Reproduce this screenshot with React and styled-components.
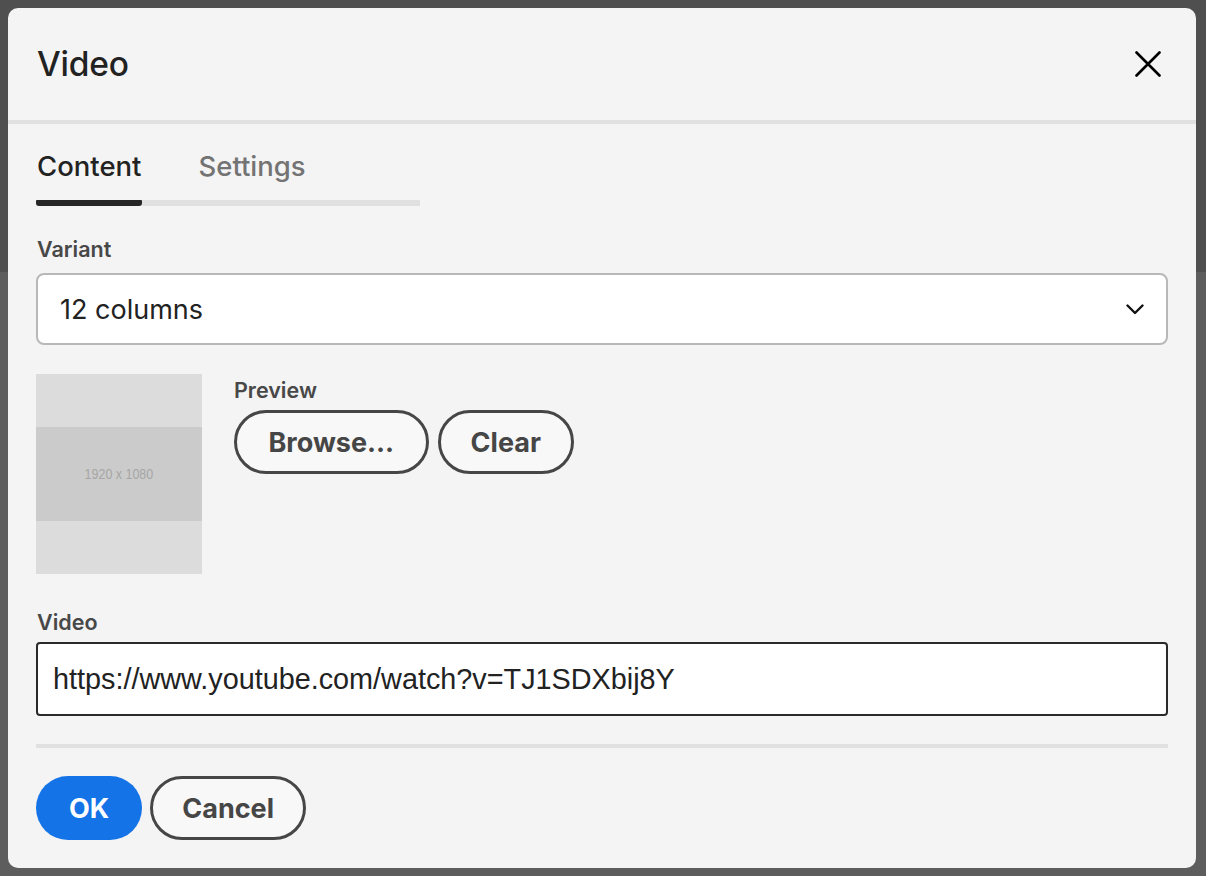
import React, { useState } from 'react';
import styled, { createGlobalStyle } from 'styled-components';

const GlobalStyle = createGlobalStyle`
    html, body {
        margin: 0;
        padding: 0;
        background: #545454;
    }
    body {
        font-family: Inter, "Noto Sans", sans-serif;
        -webkit-font-smoothing: antialiased;
    }
`;

const Backdrop = styled.div`
    width: 1206px;
    height: 876px;
    padding: 8px 10px 8px 8px;
    box-sizing: border-box;
    background: linear-gradient(to bottom, #4f4f4f 0, #4f4f4f 272px, #5d5d5d 272px);
`;

const Dialog = styled.div`
    width: 1188px;
    height: 860px;
    background: #f4f4f4;
    border-radius: 10px;
    display: flex;
    flex-direction: column;
    overflow: hidden;
`;

const Header = styled.header`
    height: 112px;
    padding: 0 33px 0 29px;
    display: flex;
    align-items: center;
    justify-content: space-between;
    border-bottom: 4px solid #e1e1e1;
`;

const Title = styled.h1`
    margin: 0;
    font-size: 33.5px;
    font-weight: 500;
    color: #222;
    letter-spacing: -0.2px;
`;

const CloseButton = styled.button`
    width: 30px;
    height: 30px;
    padding: 0;
    border: none;
    background: none;
    display: flex;
    align-items: center;
    justify-content: center;
    cursor: pointer;
`;

const Body = styled.div`
    padding: 0 28px 0 28px;
    display: flex;
    flex-direction: column;
`;

const TabList = styled.div`
    width: 384px;
    height: 76px;
    display: flex;
    align-items: stretch;
    border-bottom: 6px solid #e0e0e0;
`;

const Tab = styled.button`
    padding: 8px 1px 0;
    margin-right: ${(p) => p.$gap || 0}px;
    border: none;
    background: none;
    font-family: inherit;
    font-size: 27.5px;
    font-weight: 500;
    color: ${(p) => (p.$active ? '#222' : '#737373')};
    position: relative;
    cursor: pointer;

    &::after {
        content: '';
        display: ${(p) => (p.$active ? 'block' : 'none')};
        position: absolute;
        left: 0;
        right: 0;
        bottom: -6px;
        height: 6px;
        background: #262626;
        border-radius: 1px 1px 3px 3px;
    }
`;

const Label = styled.div`
    font-size: 21.5px;
    line-height: 27px;
    font-weight: 600;
    color: #484848;
    margin: ${(p) => p.$margin || '0'};
`;

const SelectBox = styled.div`
    height: 72px;
    box-sizing: border-box;
    margin-top: 10px;
    padding: 0 22px 0 22px;
    display: flex;
    align-items: center;
    justify-content: space-between;
    background: #fff;
    border: 2px solid #b8b8b8;
    border-radius: 8px;
    font-size: 27px;
    color: #222;
    cursor: pointer;
`;

const PreviewRow = styled.div`
    display: flex;
    gap: 32px;
    margin-top: 29px;
`;

const Thumb = styled.div`
    width: 166px;
    height: 200px;
    background: #dcdcdc;
    display: flex;
    flex-direction: column;
    justify-content: center;
`;

const ThumbBand = styled.div`
    height: 94px;
    background: #cbcbcb;
    display: flex;
    align-items: center;
    justify-content: center;
`;

const ThumbText = styled.span`
    font-family: "Liberation Sans", Arial, sans-serif;
    font-size: 14.5px;
    color: #a6a6a6;
    display: inline-block;
    transform: scaleX(0.86);
`;

const PreviewSide = styled.div`
    display: flex;
    flex-direction: column;
    padding-top: 3px;
`;

const ButtonRow = styled.div`
    display: flex;
    gap: ${(p) => p.$gap || 9}px;
    margin-top: ${(p) => p.$top || 0}px;
`;

const PillButton = styled.button`
    height: 64px;
    padding: 0 ${(p) => p.$pad || 30}px;
    border-radius: 32px;
    font-family: inherit;
    font-size: 27px;
    font-weight: 700;
    cursor: pointer;
    box-sizing: border-box;
    border: ${(p) => (p.$primary ? 'none' : '3px solid #464646')};
    background: ${(p) => (p.$primary ? '#1473e6' : '#f8f8f8')};
    color: ${(p) => (p.$primary ? '#fff' : '#464646')};
`;

const TextInput = styled.input`
    height: 74px;
    box-sizing: border-box;
    margin-top: 6px;
    padding: 0 15px;
    border: 2px solid #2a2a2a;
    border-radius: 4px;
    background: #fff;
    font-family: "Liberation Sans", Arial, sans-serif;
    font-size: 28.8px;
    color: #222;
    outline: none;
`;

const Divider = styled.div`
    height: 4px;
    background: #e1e1e1;
    margin-top: 28px;
`;

const App = () => {
    const [tab, setTab] = useState('content');
    const [url, setUrl] = useState('https://www.youtube.com/watch?v=TJ1SDXbij8Y');

    return (
        <>
            <GlobalStyle />
            <Backdrop>
                <Dialog>
                    <Header>
                        <Title>Video</Title>
                        <CloseButton aria-label="Close">
                            <svg width="26" height="26" viewBox="0 0 26 26">
                                <path d="M1.5 1.5 L24.5 24.5 M24.5 1.5 L1.5 24.5" stroke="#000" strokeWidth="2.6" strokeLinecap="round" />
                            </svg>
                        </CloseButton>
                    </Header>
                    <Body>
                        <TabList>
                            <Tab $active={tab === 'content'} $gap={55} onClick={() => setTab('content')}>Content</Tab>
                            <Tab $active={tab === 'settings'} onClick={() => setTab('settings')}>Settings</Tab>
                        </TabList>

                        <Label $margin="30px 0 0 1px">Variant</Label>
                        <SelectBox>
                            <span>12 columns</span>
                            <svg width="18" height="11" viewBox="0 0 18 11">
                                <path d="M1.5 1.5 L9 9 L16.5 1.5" stroke="#111" strokeWidth="2.4" fill="none" strokeLinecap="round" strokeLinejoin="round" />
                            </svg>
                        </SelectBox>

                        <PreviewRow>
                            <Thumb>
                                <ThumbBand>
                                    <ThumbText>1920 x 1080</ThumbText>
                                </ThumbBand>
                            </Thumb>
                            <PreviewSide>
                                <Label>Preview</Label>
                                <ButtonRow $top={6}>
                                    <PillButton $pad={31.5}>Browse...</PillButton>
                                    <PillButton $pad={30}>Clear</PillButton>
                                </ButtonRow>
                            </PreviewSide>
                        </PreviewRow>

                        <Label $margin="35px 0 0 1px">Video</Label>
                        <TextInput value={url} onChange={(e) => setUrl(e.target.value)} />

                        <Divider />

                        <ButtonRow $top={28} $gap={8}>
                            <PillButton $primary $pad={33}>OK</PillButton>
                            <PillButton $pad={29}>Cancel</PillButton>
                        </ButtonRow>
                    </Body>
                </Dialog>
            </Backdrop>
        </>
    );
};

export default App;
